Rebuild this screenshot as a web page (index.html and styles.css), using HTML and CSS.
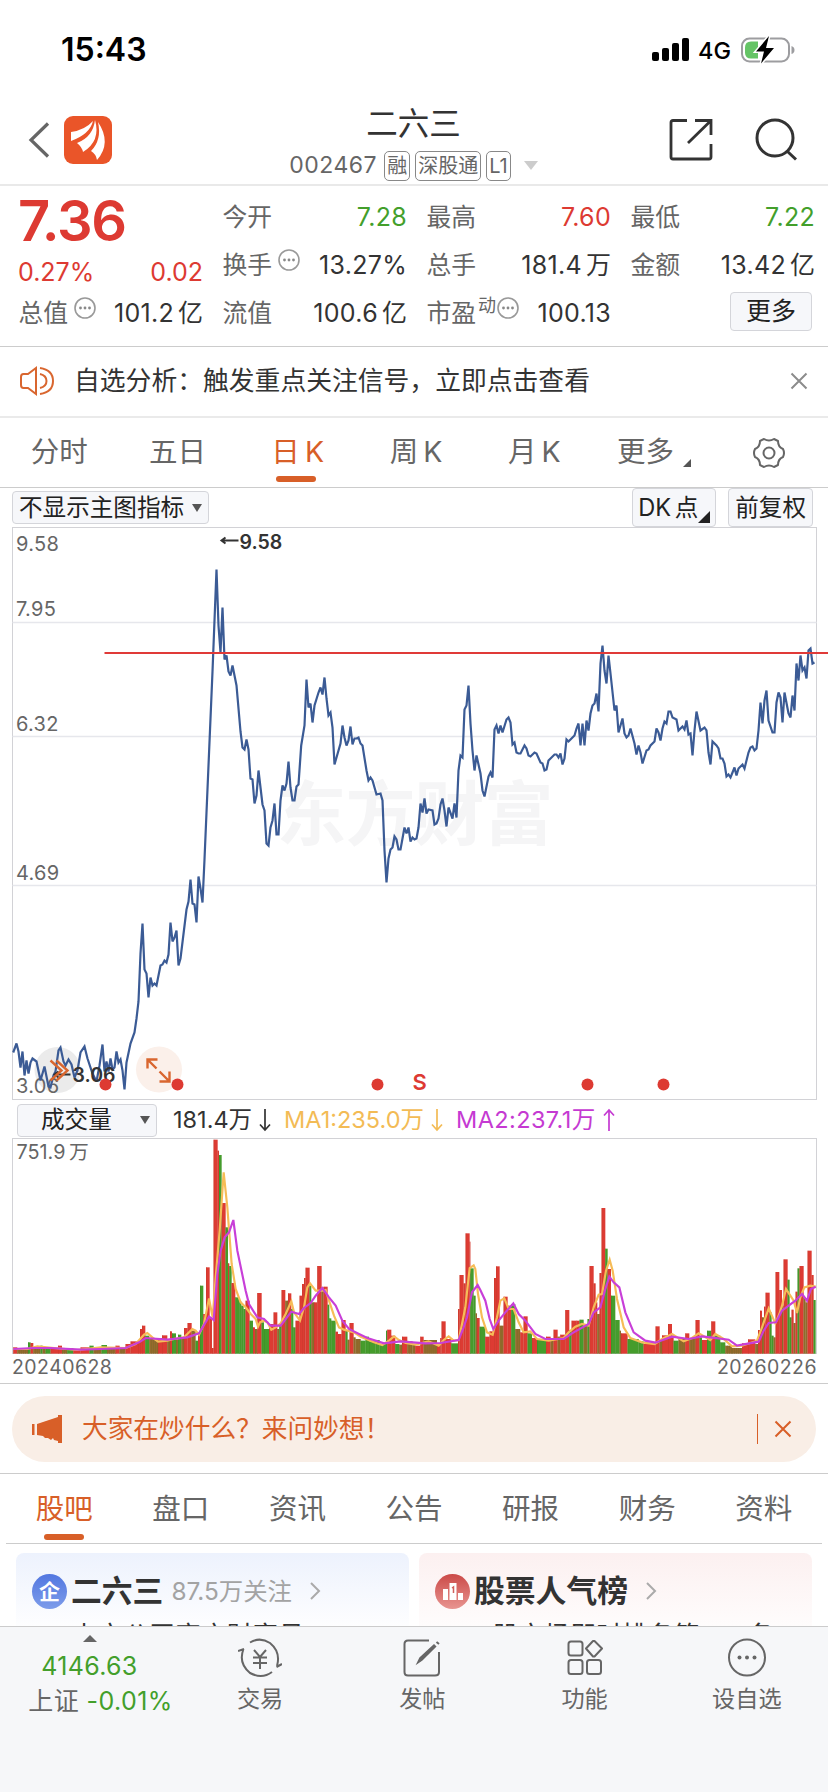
FILE: index.html
```html
<!DOCTYPE html>
<html lang="zh-CN">
<head>
    <meta charset="UTF-8">
    <meta name="viewport" content="width=device-width, initial-scale=1.0">
    <title>二六三 002467</title>
    <link rel="stylesheet" href="styles.css">
</head>
<body>
    <div class="status-bar">
        <span class="time">15:43</span>
        <div class="status-right">
            <svg class="signal" width="38" height="24" viewBox="0 0 38 24">
                <rect x="0" y="14" width="7" height="9" rx="2"/>
                <rect x="10" y="10" width="7" height="13" rx="2"/>
                <rect x="20" y="5" width="7" height="18" rx="2"/>
                <rect x="30" y="0" width="7" height="23" rx="2"/>
            </svg>
            <span class="network">4G</span>
            <svg width="54" height="28" viewBox="0 0 54 28">
                <rect x="1" y="2.500" width="47" height="23" rx="7.500" fill="none" stroke="#9d9da0" stroke-width="2"/>
                <path d="M50.500 10 q3 1 3 4 q0 3 -3 4z" fill="#9d9da0"/>
                <path d="M10 5.500 h7 v17 h-7 q-6 0 -6 -6 v-5 q0 -6 6 -6z" fill="#65c466"/>
                <path d="M28 0 L15 15.500 H23 L20 27.500 L33 12 H25z" fill="#000" stroke="#fff" stroke-width="3" paint-order="stroke"/>
            </svg>
        </div>
    </div>

    <header class="header">
        <div class="header-left">
            <svg width="22" height="36" viewBox="0 0 22 36"><path d="M20 1.500 L3 18 L20 34.500" fill="none" stroke="#666" stroke-width="3.200"/></svg>
            <svg class="logo" width="48" height="48" viewBox="0 0 48 48">
                <rect width="48" height="48" rx="9" fill="#ea5529"/>
                <path d="M7 25 V16 Q21 14 29 5 Q26 18 7 25z" fill="#fff"/>
                <path d="M13 27 Q29 21 31 4 Q37 25 19 36 Q18 31 13 27z" fill="#fff"/>
                <path d="M27 35 Q38 24 34 6 Q48 27 33 44 Q32 38 27 35z" fill="#fff"/>
            </svg>
        </div>
        <div class="header-title">
            <h1>二六三</h1>
            <div class="stock-code">
                <span class="code">002467</span>
                <span class="tag">融</span>
                <span class="tag">深股通</span>
                <span class="tag">L1</span>
                <i class="caret"></i>
            </div>
        </div>
        <div class="header-right">
            <svg width="44" height="44" viewBox="0 0 44 44" fill="none" stroke="#333" stroke-width="2.800">
                <path d="M18 2.500 H4 Q2 2.500 2 4.500 V39 Q2 41 4 41 H40 Q42 41 42 39 V26"/>
                <path d="M26 2.500 H42 V17 M41 3.500 L19 25"/>
            </svg>
            <svg width="44" height="44" viewBox="0 0 44 44" fill="none" stroke="#333" stroke-width="3">
                <circle cx="20" cy="20" r="18"/><path d="M32 33 L41 41.500"/>
            </svg>
        </div>
    </header>

    <section class="quote">
        <div class="quote-col">
            <div class="price">7.36</div>
            <div class="change"><span>0.27%</span><span>0.02</span></div>
            <div class="cell"><label>总值</label><svg class="dots"><use href="#more-dots"/></svg><b>101.2<em>亿</em></b></div>
        </div>
        <div class="quote-col">
            <div class="cell"><label>今开</label><b class="down">7.28</b></div>
            <div class="cell"><label>换手</label><svg class="dots"><use href="#more-dots"/></svg><b>13.27%</b></div>
            <div class="cell"><label>流值</label><b>100.6<em>亿</em></b></div>
        </div>
        <div class="quote-col">
            <div class="cell"><label>最高</label><b class="up">7.60</b></div>
            <div class="cell"><label>总手</label><b>181.4<em>万</em></b></div>
            <div class="cell"><label>市盈</label><small>动</small><svg class="dots tight"><use href="#more-dots"/></svg><b>100.13</b></div>
        </div>
        <div class="quote-col">
            <div class="cell"><label>最低</label><b class="down">7.22</b></div>
            <div class="cell"><label>金额</label><b>13.42<em>亿</em></b></div>
            <div class="cell"><button class="btn more-btn">更多</button></div>
        </div>
    </section>

    <section class="notice">
        <svg width="34" height="30" viewBox="0 0 34 30" fill="none" stroke="#d9662f" stroke-width="2">
            <path d="M16 2 V28 L8 22 H3.500 Q1 22 1 19 V11 Q1 8 3.500 8 H8z"/>
            <path d="M20 8 Q26.500 9.500 26.500 15 Q26.500 20.500 20 22 M20 2 Q33 4 33 15 Q33 26 20 28"/>
        </svg>
        <span>自选分析：触发重点关注信号，立即点击查看</span>
        <svg class="close" width="18" height="18" viewBox="0 0 18 18"><path d="M1.500 1.500 L16.500 16.500 M16.500 1.500 L1.500 16.500" stroke="#8c8c8c" stroke-width="2"/></svg>
    </section>

    <nav class="tabs period">
        <span>分时</span>
        <span>五日</span>
        <span class="active k">日 K</span>
        <span class="k">周 K</span>
        <span class="k">月 K</span>
        <span>更多<i class="corner"></i></span>
        <span>
            <svg width="34" height="32" viewBox="0 0 34 32" fill="none" stroke="#666" stroke-width="2">
                <path d="M12 2 Q17 5 22 2 L26 4 Q26 10 31 12 Q33 16 31 20 Q26 22 26 28 L22 30 Q17 27 12 30 L8 28 Q8 22 3 20 Q1 16 3 12 Q8 10 8 4z" stroke-linejoin="round"/>
                <circle cx="17" cy="16" r="5.500"/>
            </svg>
        </span>
    </nav>

    <div class="chart-tools">
        <button class="btn">不显示主图指标<i class="caret dark"></i></button>
        <button class="btn tall dk">DK 点<i class="corner big"></i></button>
        <button class="btn tall">前复权</button>
    </div>

    <div class="chart price-chart">
        <svg width="804" height="572" viewBox="0.500 0.500 804 572">
            <text class="watermark" x="264" y="312" textLength="277">东方财富</text>
            <path class="grid-line" d="M0 95 H804 M0 209 H804 M0 358 H804"/>
            <circle cx="45" cy="542.500" r="23" fill="#ebebeb"/>
            <circle cx="146.500" cy="542" r="23" fill="#fbf0ea"/>
            <g class="axis">
                <text x="3.500" y="23">9.58</text>
                <text x="3.500" y="88">7.95</text>
                <text x="3.500" y="203">6.32</text>
                <text x="3.500" y="352">4.69</text>
                <text x="3.500" y="565">3.06</text>
            </g>
            <polyline class="price-line" points="0.7,525 4,516 6,524 8,540 10,524 12,548 14,533 16,546 18,535 20,531 24,534 28,553 32,539 36,559 38,560 41,548 43,544 46,523 48,520 51,534 53,538 56,532 59,537 62,550 65,543 68,525 72,519 75,531 80,546 84,554 87,538 90,517 92,544 94,534 96,544 98,531 100,542 102,540 104,524 106,535 108,532 110,543 112,562 114,535 118,516 122,505 124,491 126,474 128,426 130,396 132,442 134,446 136,470 138,450 140,458 142,456 144,458 148,438 150,437 152,433 154,435 156,427 158,395 160,414 162,410 164,403 166,438 168,431 174,382 176,374 178,352 180,376 182,377 184,395 186,349 188,361 190,375 192,332 200,144 204,42 206,98 208,125 210,80 212,132 214,128 216,144 218,148 220,138 224,158 228,204 230,220 232,222 234,212 236,222 238,251 240,252 242,276 244,268 246,243 250,277 252,283 254,316 256,318 258,300 260,293 262,276 264,307 266,307 268,273 270,258 272,263 274,256 276,234 278,260 280,273 282,273 284,259 286,257 288.7,218 292,198 294,152 296,180 298,176 300,195 302,178 306,165 308,160 310,167 312,150 314,171 316,188 318,185 320,200 322,237 324,230 328,216 330,198 332,210 334,218 336,213 338,199 340,217 342,211 344,211 346,210 348,216 350,218 354,243 356,253 358,250 360,253 364,267 368,266 370,273 372,323 374,355 376,331 378,322 380,320 382,309 384,312 386,322 388,322 390,311 392,300 394,306 396,300 398,314 400,310 402,312 404,311 406,300 408,276 410,285 412,271 414,286 416,282 420,283 422,297 424,296 426,291 428,277 430,271 432,283 434,299 436,280 440,291 442,276 444,290 446,243 448,228 450,230 452,182 454,178 456,158 458,196 460,223 462,243 464,228 468,246 470,263 472,269 476,249 478,245 480,250 482,202 484,198 486,206 488,198 490,205 494,192 496,190 498,195 500,217 502,215 504,225 506,226 508,226 512,218 514,221 516,228 518,229 522,225 524,226 528,235 530,236 532,243 534,242 536,233 542,227 544,227 546,230 548,226 550,237 552,231 554,212 556,214 558,212 562,208 564,201 566,196 568,218 570,196 572,218 574,193 576,203 578,186 580,178 582,176 584,166 586,184 588,136 590,118 592,143 594,156 596,128 598,146 602,183 604,178 606,205 610,191 612,206 614,210 616,208 618,201 622,216 624,227 626,218 628,225 630,236 634,223 636,222 638,218 642,214 644,201 646,205 648,213 650,201 652,194 654,196 656,184 658,184 660,190 664,192 666,203 670,199 672,202 674,193 676,207 678,206 680,228 682,203 684,184 688,203 692,200 694,203 696,225 698,237 700,214 704,218 706,221 708,231 710,231 712,236 714,249 716,247 718,250 720,245 722,240 724,248 726,241 730,237 732,241 736,225 738,220 740,219 742,223 744,221 746,203 748,175 750,196 752,173 754,163 756,193 760,205 762,205 764,175 766,165 768,170 770,195 772,165 776,186 778,190 780,168 782,183 784,136 786,153 788,128 790,143 792,140 794,151 796,123 798,121 800,136 802,135"/>
            <path class="alert-line" d="M92 125.500 H830"/>
            <g class="mark">
                <path d="M209 13 H226 M213 10 L209 13 L213 16"/>
                <text x="227" y="21">9.58</text>
                <path d="M42 547 H58 M46 544 L42 547 L46 550"/>
                <text x="60" y="554">3.06</text>
            </g>
            <g class="tool-arrows">
                <path d="M38 533 L49 543 L38 553 M44 533 L55 543 L44 553"/>
                <path d="M135 541 V532 H145 M136 533 L144 541 M147 544 L156 553 M157 544 V554 H147"/>
            </g>
            <g class="event">
                <circle cx="93" cy="557" r="6"/>
                <circle cx="165" cy="557" r="6"/>
                <circle cx="365" cy="557" r="6"/>
                <circle cx="575" cy="557" r="6"/>
                <circle cx="651" cy="557" r="6"/>
                <text x="400" y="562">S</text>
            </g>
        </svg>
    </div>

    <div class="volume-head">
        <button class="btn">成交量<i class="caret dark"></i></button>
        <span class="vol">181.4万<svg class="arrow"><use href="#arrow-down"/></svg></span>
        <span class="ma1">MA1:235.0万<svg class="arrow"><use href="#arrow-down"/></svg></span>
        <span class="ma2">MA2:237.1万<svg class="arrow"><use href="#arrow-up"/></svg></span>
    </div>

    <div class="chart volume-chart">
        <span class="vol-max">751.9 万</span>
        <svg width="804" height="215" viewBox="37 25 2412 645">
            <g id="bars"></g>
            <polyline class="line-ma1" points="38,655 80,655 110,647 160,652 230,658 300,650 375,652 405,640 430,612 440,607 455,620 472,633 500,630 520,625 550,620 575,595 585,600 595,612 610,580 625,503 636,560 645,440 657,300 669,125 680,230 693,400 705,475 720,515 735,530 750,550 765,565 772,588 778,575 790,570 800,575 812,597 825,590 840,578 855,550 872,512 880,545 898,570 910,530 920,470 928,458 945,480 965,480 975,478 985,510 1000,555 1015,590 1030,597 1060,605 1080,618 1120,635 1145,643 1165,630 1180,617 1195,628 1215,637 1244,642 1284,632 1314,645 1329,628 1344,617 1359,630 1374,628 1384,580 1394,530 1407,412 1419,404 1424,415 1432,490 1444,560 1459,605 1476,612 1489,560 1499,510 1511,503 1524,535 1539,535 1554,575 1569,605 1589,602 1609,625 1644,630 1689,622 1704,605 1724,588 1744,580 1764,585 1779,530 1794,492 1804,490 1816,420 1827,387 1836,420 1849,505 1869,590 1889,622 1924,635 1962,640 1984,625 2014,610 2049,632 2074,622 2094,608 2129,628 2144,610 2169,625 2194,647 2224,645 2269,630 2284,590 2304,533 2324,578 2336,550 2344,525 2356,475 2369,495 2379,510 2389,547 2399,500 2411,470 2429,465 2445,468"/>
            <polyline class="line-ma2" points="38,655 100,652 150,652 240,657 300,655 375,652 415,635 435,622 500,627 560,620 595,608 625,558 639,568 650,430 660,360 672,320 685,305 698,268 710,360 735,480 745,520 770,560 790,565 810,585 840,585 855,565 872,543 895,550 910,532 930,517 945,495 965,472 985,500 1005,525 1025,570 1045,595 1075,610 1100,622 1150,638 1200,632 1274,638 1319,637 1374,628 1389,590 1399,560 1414,485 1431,463 1439,478 1454,510 1467,565 1478,595 1494,570 1514,545 1538,518 1554,550 1574,570 1604,610 1634,625 1689,625 1719,605 1764,580 1779,545 1799,530 1814,475 1826,438 1839,455 1856,470 1874,545 1899,605 1934,630 1964,636 2014,618 2064,625 2104,617 2129,620 2184,627 2209,645 2274,633 2289,600 2304,577 2326,575 2344,540 2364,525 2384,510 2404,490 2419,510 2431,475 2445,468"/>
        </svg>
    </div>
    <div class="dates"><span>20240628</span><span>20260226</span></div>

    <section class="ask">
        <div class="ask-pill">
            <svg width="32" height="28" viewBox="0 0 32 28" fill="#d85f28">
                <path d="M0 9 h2.500 v11 h-2.500z M5 9 L26 2 V0 H30 V28 H26 V26 L22 25 L21 23 L19 25 L16 23 L13 23 L11 21 L5 20z"/>
            </svg>
            <span>大家在炒什么？来问妙想！</span>
            <i class="divider"></i>
            <svg width="18" height="18" viewBox="0 0 18 18"><path d="M1.500 1.500 L16.500 16.500 M16.500 1.500 L1.500 16.500" stroke="#d85f28" stroke-width="2"/></svg>
        </div>
    </section>

    <nav class="tabs content-tabs">
        <span class="active">股吧</span>
        <span>盘口</span>
        <span>资讯</span>
        <span>公告</span>
        <span>研报</span>
        <span>财务</span>
        <span>资料</span>
    </nav>

    <section class="cards">
        <div class="card blue">
            <div class="card-head">
                <span class="badge">企</span>
                <h2>二六三</h2>
                <span class="follow">87.5万关注</span>
                <svg class="chevron"><use href="#chevron"/></svg>
            </div>
            <p>上市公司官方财富号</p>
        </div>
        <div class="card red">
            <div class="card-head">
                <span class="badge">
                    <svg width="22" height="20" viewBox="0 0 22 20"><path d="M1 8 h5 v11 h-5z M7.500 2 h7 v17 h-7z M16 12 h5 v7 h-5z" fill="#fff"/><path d="M10 7 l1.500 -1 v6" fill="none" stroke="#d0605c" stroke-width="1.500"/></svg>
                </span>
                <h2>股票人气榜</h2>
                <svg class="chevron"><use href="#chevron"/></svg>
            </div>
            <p>A股市场即时排名第<em>942</em>名</p>
        </div>
    </section>

    <footer class="bottom-bar">
        <div class="index">
            <i class="caret up-caret"></i>
            <span class="down">4146.63</span>
            <span class="index-name">上证 <span class="down">-0.01%</span></span>
        </div>
        <div class="action">
            <svg width="44" height="40" viewBox="0 0 44 40" fill="none" stroke="#666" stroke-width="2">
                <path d="M12 4.500 Q22 -1.500 32 5 Q43 14 39 28 M44 26 L38.500 29 M34 34 Q24 41.500 12 35 Q0 25 5.500 11 M0 13 L6 11"/>
                <path d="M16 12 L22 19 L28 12 M15 19.500 H29 M15 25 H29 M22 19 V31"/>
            </svg>
            <span>交易</span>
        </div>
        <div class="action">
            <svg width="38" height="40" viewBox="0 0 38 40" fill="none" stroke="#666" stroke-width="2">
                <path d="M26 2.500 H5 Q1.500 2.500 1.500 6 V34 Q1.500 37.500 5 37.500 H32 Q36 37.500 36 34 V14"/>
                <path d="M14.500 25 L17 20 L31 7 L32.500 8.500 L19 22z" fill="#666" stroke-width="1.500"/><path d="M33.500 4 L36 6"/>
            </svg>
            <span>发帖</span>
        </div>
        <div class="action">
            <svg width="36" height="40" viewBox="0 0 36 40" fill="none" stroke="#666" stroke-width="2">
                <rect x="1.500" y="3.500" width="14" height="14" rx="2.500"/>
                <rect x="1.500" y="22" width="14" height="14" rx="2.500"/>
                <rect x="20" y="22" width="14" height="14" rx="2.500"/>
                <path d="M26 3 L27.500 3 L35 10.500 L27.500 18.500 H26 L19 10.500z" stroke-linejoin="round"/>
            </svg>
            <span>功能</span>
        </div>
        <div class="action">
            <svg width="40" height="40" viewBox="0 0 40 40" fill="none" stroke="#666" stroke-width="2">
                <circle cx="20" cy="19.500" r="18"/>
                <g fill="#666" stroke="none"><circle cx="12.500" cy="19.500" r="2"/><circle cx="20" cy="19.500" r="2"/><circle cx="27.500" cy="19.500" r="2"/></g>
            </svg>
            <span>设自选</span>
        </div>
    </footer>

    <!-- shared icons -->
    <svg class="sprite">
        <symbol id="more-dots" viewBox="0 0 22 22">
            <circle cx="11" cy="11" r="10" fill="none" stroke="#999" stroke-width="1.600"/>
            <circle cx="6.500" cy="11" r="1.400" fill="#888"/><circle cx="11" cy="11" r="1.400" fill="#888"/><circle cx="15.500" cy="11" r="1.400" fill="#888"/>
        </symbol>
        <symbol id="arrow-down" viewBox="0 0 12 24"><path d="M6 1 V22 M1 16.500 L6 22 L11 16.500" fill="none" stroke="currentColor" stroke-width="1.700"/></symbol>
        <symbol id="arrow-up" viewBox="0 0 12 24"><path d="M6 23 V2 M1 7.500 L6 2 L11 7.500" fill="none" stroke="currentColor" stroke-width="1.700"/></symbol>
        <symbol id="chevron" viewBox="0 0 12 18"><path d="M2 1 L10 9 L2 17" fill="none" stroke="#aaa" stroke-width="2"/></symbol>
    </svg>

    <script src="chart.js"></script>
</body>
</html>
```
FILE: styles.css
```css
* {
    box-sizing: border-box;
}
body {
    margin: 0;
    width: 828px;
    height: 1792px;
    overflow: hidden;
    background: #fff;
    color: #333;
    font-family: Inter, "Noto Sans CJK SC", sans-serif;
    font-size: 25px;
    line-height: 1;
}
h1, h2, p {
    margin: 0;
}
em, i {
    font-style: normal;
}
svg {
    display: block;
    flex: none;
}
.sprite {
    display: none;
}
.up {
    color: #dd3a32;
}
.down {
    color: #439f2b;
}
.btn {
    display: flex;
    align-items: center;
    height: 33px;
    padding: 0 6px;
    border: 1px solid #d4d5da;
    border-radius: 4px;
    background: #f6f7fa;
    color: #222;
    font: inherit;
    font-size: 23.600px;
    line-height: 1;
    white-space: nowrap;
}
.caret {
    border: 7px solid transparent;
    border-top: 9px solid #ccc;
    border-bottom: 0;
}
.caret.dark {
    border-width: 8px 5px 0;
    border-top-color: #555;
}
.corner {
    border: 4px solid transparent;
    border-right-color: #555;
    border-bottom-color: #555;
}
.corner.big {
    border-width: 6px;
    border-right-color: #222;
    border-bottom-color: #222;
}

/* status bar */
.status-bar {
    display: flex;
    justify-content: space-between;
    align-items: center;
    height: 98px;
    padding: 2px 33px 0 61px;
    color: #000;
}
.time {
    font-size: 32px;
    font-weight: 600;
}
.status-right {
    display: flex;
    align-items: center;
}
.network {
    margin: 2px 10px 0 8px;
    font-size: 23.500px;
    font-weight: 500;
}

/* header */
.header {
    display: flex;
    justify-content: space-between;
    height: 88px;
    padding: 0 29px 0 28px;
    border-bottom: 2px solid #e9e9e9;
}
.header-left {
    display: flex;
    gap: 14px;
    width: 220px;
    padding-top: 18px;
    align-items: center;
    height: 66px;
}
.header-title {
    display: flex;
    flex-direction: column;
    align-items: center;
}
.header-title h1 {
    margin-top: 10px;
    font-size: 31.500px;
    font-weight: 400;
}
.stock-code {
    display: flex;
    align-items: center;
    gap: 5px;
    margin: 11px 0 0 0;
    color: #666;
}
.code {
    margin-right: 2px;
    font-size: 23px;
    letter-spacing: 0.500px;
}
.tag {
    height: 30px;
    padding: 0 2px;
    border: 1px solid #888;
    border-radius: 5px;
    font-size: 20px;
    line-height: 28px;
}
.stock-code .caret {
    margin-left: 8px;
}
.header-right {
    display: flex;
    gap: 42px;
    width: 220px;
    padding-top: 20px;
    justify-content: flex-end;
}

/* quote */
.quote {
    display: grid;
    grid-template-columns: repeat(4, 184px);
    column-gap: 20px;
    height: 161px;
    padding: 7px 0 0 19px;
    border-bottom: 1px solid #ccc;
}
.price {
    height: 56px;
    margin-left: -1px;
    color: #dd3a32;
    font-size: 56px;
    font-weight: 600;
    letter-spacing: -1.400px;
    line-height: 56px;
}
.change {
    display: flex;
    justify-content: space-between;
    height: 40px;
    margin-left: -1px;
    color: #dd3a32;
    line-height: 46px;
}
.cell {
    display: flex;
    align-items: center;
    height: 48px;
}
.cell label {
    margin-left: -0.500px;
    color: #666;
    font-size: 24.800px;
}
.cell b {
    margin-left: auto;
    font-weight: 400;
    letter-spacing: 0.300px;
}
.cell b em {
    margin-left: 4px;
    letter-spacing: 0;
}
.cell small {
    margin: -14px 1px 0 2px;
    color: #666;
    font-size: 18px;
}
.dots {
    width: 22px;
    height: 22px;
    margin: -10px 0 0 6px;
}
.dots.tight {
    margin-left: 0;
}
.more-btn {
    height: 39px;
    margin: -3px 3px 0 auto;
    padding: 0 15px;
    font-size: 25px;
}

/* notice */
.notice {
    display: flex;
    align-items: center;
    height: 71px;
    padding: 0 20px 2px;
    border-bottom: 2px solid #eaeaea;
    font-size: 25.800px;
}
.notice span {
    margin-left: 20px;
}
.notice .close {
    margin-left: auto;
}

/* tabs */
.tabs {
    display: grid;
    grid-template-columns: repeat(7, 1fr);
    color: #666;
    font-size: 28.500px;
}
.tabs span {
    display: flex;
    position: relative;
    justify-content: center;
    align-items: center;
}
.tabs .active {
    color: #d85f28;
}
.tabs .active::after {
    content: "";
    position: absolute;
    bottom: 5px;
    left: 39px;
    width: 40px;
    height: 6px;
    border-radius: 3px;
    background: #d85f28;
}
.tabs .k {
    padding-left: 4px;
    word-spacing: -3px;
}
.period {
    height: 70px;
    border-bottom: 1px solid #ccc;
}
.tabs .corner {
    margin: 20px -7px 0 9px;
}

/* price chart */
.chart-tools {
    display: flex;
    align-items: center;
    height: 39px;
    padding: 0 15px 0 12px;
}
.chart-tools .caret {
    margin-left: 8px;
}
.chart-tools .tall {
    height: 39px;
    margin-left: 12px;
}
.chart-tools .dk {
    position: relative;
    width: 84px;
    margin-left: auto;
    padding-left: 5px;
    word-spacing: -3px;
}
.dk .corner {
    position: absolute;
    right: 5px;
    bottom: 3px;
}
.chart {
    position: relative;
    width: 805px;
    margin-left: 11.500px;
    border: 1px solid #d2d2d6;
}
.chart svg {
    overflow: visible;
}
.price-chart {
    height: 573px;
}
.watermark {
    fill: #f5f5f6;
    font-size: 70px;
    font-weight: 700;
}
.grid-line {
    stroke: #e6e7ec;
    stroke-width: 1.500;
}
.axis text {
    fill: #666;
    font-size: 20px;
    letter-spacing: 0.300px;
}
.price-line {
    fill: none;
    stroke: #3b5b95;
    stroke-width: 2.200;
    stroke-linejoin: miter;
    stroke-miterlimit: 3;
}
.alert-line {
    stroke: #e03a38;
    stroke-width: 2;
}
.mark path {
    fill: none;
    stroke: #333;
    stroke-width: 2;
}
.mark text {
    fill: #333;
    font-size: 19.500px;
    font-weight: 600;
}
.tool-arrows {
    fill: none;
    stroke: #d9662f;
    stroke-width: 2.400;
}
.event {
    fill: #dd3a32;
}
.event text {
    font-size: 22px;
    font-weight: 600;
}

/* volume */
.volume-head {
    display: flex;
    align-items: center;
    height: 38px;
    padding: 2px 0 0 17px;
    font-size: 23.500px;
}
.volume-head .btn {
    width: 140px;
    margin-right: 16px;
    padding-left: 23px;
}
.volume-head .caret {
    margin-left: auto;
}
.volume-head span {
    display: flex;
    align-items: center;
}
.volume-head .arrow {
    width: 12px;
    height: 24px;
    margin-left: 7px;
}
.volume-head .vol {
    width: 111px;
}
.ma1 {
    width: 172px;
    color: #f3bb55;
}
.ma2 {
    color: #c53ad2;
    letter-spacing: 0.400px;
}
.volume-chart {
    height: 216px;
}
.vol-max {
    position: absolute;
    top: 4px;
    left: 4px;
    color: #666;
    font-size: 19.800px;
    word-spacing: -2px;
}
.line-ma1, .line-ma2 {
    fill: none;
    stroke: #f6bc57;
    stroke-width: 6.500;
}
.line-ma2 {
    stroke: #c83fd8;
}
.dates {
    display: flex;
    justify-content: space-between;
    height: 30px;
    padding: 4px 11px 0 12px;
    border-bottom: 1px solid #ccc;
    color: #666;
    font-size: 19.500px;
    letter-spacing: 0.450px;
}

/* ask banner */
.ask {
    height: 90px;
    padding: 12px 12px 0;
    border-bottom: 1px solid #ccc;
}
.ask-pill {
    display: flex;
    align-items: center;
    height: 66px;
    padding: 0 24px 0 20px;
    border-radius: 33px;
    background: #f9eee6;
    color: #d85f28;
    font-size: 25.700px;
}
.ask-pill span {
    margin-left: 18px;
}
.divider {
    width: 1px;
    height: 30px;
    margin: 0 16px 0 auto;
    background: #d85f28;
}

.content-tabs {
    height: 70px;
    margin: 0 6px;
    padding-top: 2px;
    border-bottom: 1px solid #ccc;
}
.content-tabs .active::after {
    bottom: 3px;
    left: 38px;
}

/* cards */
.cards {
    display: grid;
    grid-template-columns: 393px 393px;
    gap: 10px;
    height: 82px;
    padding: 9px 16px 0;
    overflow: hidden;
}
.card {
    height: 120px;
    padding: 20px 16px 0;
    border-radius: 8px;
    background: linear-gradient(#edf2fd, #fff 80px);
}
.card.red {
    background: linear-gradient(#fcf0f0, #fff 90px);
}
.card-head {
    display: flex;
    align-items: center;
    height: 36px;
}
.badge {
    display: flex;
    justify-content: center;
    align-items: center;
    width: 35px;
    height: 35px;
    border-radius: 50%;
    background: linear-gradient(#5277e0, #7d9cea);
    color: #fff;
    font-size: 21px;
    font-weight: 700;
}
.red .badge {
    background: linear-gradient(#cb4a48, #e89490);
}
.card h2 {
    margin-left: 4px;
    font-size: 30.800px;
    font-weight: 700;
}
.follow {
    margin-left: 8px;
    color: #a3a3a3;
    font-size: 24.400px;
}
.chevron {
    width: 12px;
    height: 18px;
    margin-left: 17px;
}
.card p {
    margin: 14px 0 0 40px;
    font-size: 25.800px;
    white-space: nowrap;
}
.card p em {
    color: #e39a78;
}

/* bottom bar */
.bottom-bar {
    display: grid;
    grid-template-columns: 179px repeat(4, 1fr);
    height: 167px;
    border-top: 1px solid #ccc;
    background: #f6f7f9;
    color: #666;
}
.index {
    display: flex;
    flex-direction: column;
    align-items: center;
    padding-top: 8px;
}
.up-caret {
    border-width: 0 7px 7px;
    border-bottom: 7px solid #666;
    border-top: 0;
}
.index > .down {
    margin-top: 12px;
    letter-spacing: 0.300px;
}
.index-name {
    margin: 10px 0 0 22px;
    letter-spacing: 0.400px;
    white-space: nowrap;
}
.action {
    display: flex;
    flex-direction: column;
    align-items: center;
    padding-top: 11px;
    font-size: 23.200px;
}
.action span {
    margin-top: 10px;
}
```
FILE: chart.js
```js
// x, top, colour (r = up, g = down, b = mixed); each bar group runs to the next x
const volume = `38,650,r 50,655,b 82,635,g 90,637,r 98,650,b 120,645,g 126,652,b 135,652,g 150,654,r 172,645,r 184,653,b 200,652,g 218,655,r 240,650,r 267,645,g 279,653,b 303,643,g 319,652,b 345,645,r 357,654,b
375,640,r 390,632,r 412,628,r 418,595,r 424,585,r 434,615,g 446,625,b 472,622,r 484,614,r 500,628,b 508,602,r 514,608,g 526,626,b 532,612,g 542,622,b 550,592,r 561,577,r 573,600,b 585,630,g 592,610,r 598,465,g 608,550,r 616,410,r 627,560,r 634,652,r
639,27,r 651,60,r 655,73,g 663,217,r 675,290,g 682,398,r 686,406,g 693,457,r 704,500,g 716,512,g 722,525,g 729,535,g 735,510,r 747,570,g 757,590,r 763,595,b 770,487,r 783,575,g 790,595,g 805,580,r 819,545,r 830,595,b 836,580,g 843,478,r 854,510,b 862,488,r 872,535,g 878,590,g 885,570,r 897,495,r 904,460,r 910,442,r 915,411,r 927,465,g 932,515,b 940,515,r 950,406,r 963,470,b 969,468,r 981,522,g 986,563,g 992,570,g 1005,603,r 1012,610,r 1023,568,r 1035,600,g 1041,627,b 1047,577,r 1059,620,b 1065,625,b 1080,630,g 1095,618,g 1105,632,g 1125,628,g 1137,640,g 1156,600,g 1160,597,r 1172,615,r 1184,640,g 1196,642,b 1204,618,r 1220,632,b 1236,640,b
1244,645,r 1259,618,r 1269,628,b 1309,645,r 1319,622,r 1323,572,r 1335,625,r 1352,638,g 1372,535,r 1377,433,r 1389,458,r 1395,308,r 1407,333,r 1409,413,g 1419,495,g 1425,548,b 1429,562,r 1437,588,g 1454,618,r 1467,602,r 1480,442,r 1486,407,r 1497,585,b 1509,498,r 1521,525,r 1532,520,g 1544,595,b 1559,605,r 1569,557,r 1581,608,g 1594,622,r 1609,628,g 1636,618,r 1650,622,b 1659,597,r 1671,618,b 1679,612,r 1694,538,r 1706,598,g 1713,570,r 1727,570,r 1737,567,g 1749,585,b 1761,565,g 1767,406,r 1779,458,r 1785,515,r 1790,550,b 1797,427,r 1803,232,r 1814,354,g 1821,415,r 1831,495,g 1844,568,g 1857,600,b 1861,608,r 1881,625,g 1914,632,g 1929,640,r 1965,587,r 1977,625,b 1984,614,r 2002,580,r 2014,615,r 2019,630,g 2034,625,b 2054,608,r 2066,622,b 2085,568,r 2097,620,g 2104,628,r 2119,600,g 2132,572,r 2144,615,g 2159,635,g 2174,645,b 2194,652,b 2224,638,r 2242,626,r 2264,640,b 2272,598,r 2278,540,r 2284,560,b 2290,528,r 2295,486,r 2307,545,g 2313,615,g 2319,620,b 2325,424,r 2336,478,r 2344,525,b 2349,386,r 2361,447,g 2367,560,g 2373,537,r 2379,577,b 2385,483,r 2391,413,g 2397,406,r 2409,500,b 2415,515,b 2421,360,r 2433,433,r 2439,508,g`;

const colors = { r: '#dd3b33', g: '#459c2c', b: '#966a2d' };
const edges = { r: '#c53c2c', g: '#3f8a27', b: '#7c6a28' };
const baseline = 669;
const rows = volume.split(/\s+/).map(row => row.split(','));

let html = '';
rows.forEach(([x, top, c], i) => {
    const end = i + 1 < rows.length ? +rows[i + 1][0] : 2445;
    const height = baseline - top;
    html += `<rect x="${x}" y="${top}" width="${end - x}" height="${height}" fill="${colors[c]}"/>`;
    // thin separators between neighbouring days
    for (let sx = +x; c === 'b' ? sx < end : sx === +x; sx += 6) {
        html += `<rect x="${sx}" y="${top}" width="1.5" height="${height}" fill="${edges[c]}"/>`;
    }
});
document.getElementById('bars').innerHTML = html;
```
